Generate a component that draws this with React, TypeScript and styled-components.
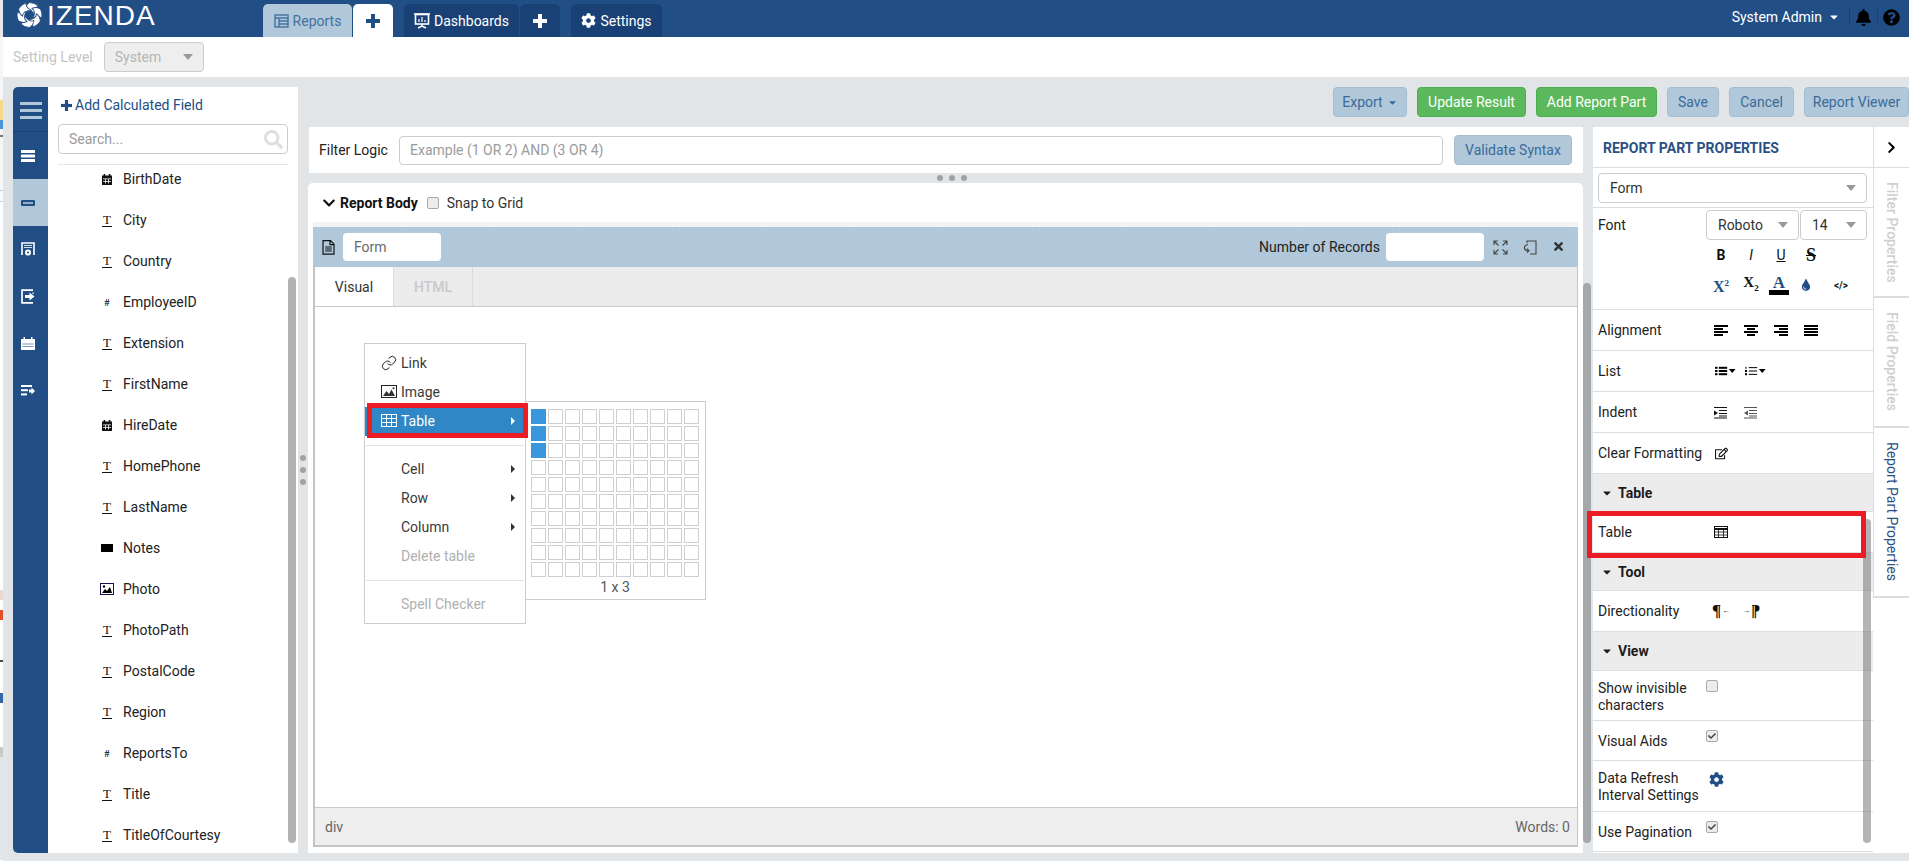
import React from 'react';
import styled, { createGlobalStyle } from 'styled-components';
import {
  FaBell, FaCaretDown, FaCheck, FaChevronDown, FaChevronRight, FaCog, FaQuestionCircle,
  FaRegEdit, FaSearch, FaTimes, FaTint,
} from 'react-icons/fa';
import { Link as LinkIcon } from 'lucide-react';

const BLUE = '#224e86';
const LIGHT = '#b0c8d9';
const PANEL_GRAY = '#e1e5e8';

const GlobalStyle = createGlobalStyle`
  html, body { margin: 0; padding: 0; background: #fff; overflow: hidden; }
  body { font-family: Roboto, "Liberation Sans", sans-serif; font-size: 14px; color: #2b2b2b; }
  * { box-sizing: border-box; }
`;

const Page = styled.div`
  width: 1909px;
  height: 861px;
  display: flex;
  overflow: hidden;
`;

const Sliver = styled.div`
  width: 3px;
  display: flex;
  flex-direction: column;
`;

const SliverBit = styled.div<{ $h: number; $c: string }>`
  height: ${(p) => p.$h}px;
  background: ${(p) => p.$c};
`;

const Shell = styled.div`
  width: 1906px;
  display: flex;
  flex-direction: column;
`;

const TopBar = styled.header`
  height: 37px;
  flex: none;
  display: flex;
  background: ${BLUE};
  color: #fff;
  padding-left: 13px;
`;

const Logo = styled.div`
  width: 247px;
  flex: none;
  display: flex;
  align-items: flex-start;
  gap: 4px;
  & > svg { margin-top: 2px; }
`;

const LogoText = styled.span`
  font-family: "Liberation Sans", sans-serif;
  font-size: 28px;
  line-height: 32px;
  letter-spacing: 1px;
  color: #fff;
`;

const TabGroup = styled.nav`
  display: flex;
  align-self: flex-end;
  height: 33px;
  gap: 1px;
  margin-right: 11px;
`;

const TopTab = styled.div<{ $tone: 'light' | 'white' | 'dark'; $w: number }>`
  width: ${(p) => p.$w}px;
  display: flex;
  align-items: center;
  justify-content: center;
  gap: 4px;
  font-size: 14px;
  border-radius: 5px 5px 0 0;
  background: ${(p) => (p.$tone === 'light' ? LIGHT : p.$tone === 'white' ? '#fff' : '#1a4175')};
  color: ${(p) => (p.$tone === 'dark' ? '#fff' : '#45719f')};
`;

const TopRight = styled.div`
  margin-left: auto;
  display: flex;
  align-items: center;
  height: 34px;
  padding-right: 4px;
`;

const UserName = styled.span`
  margin-right: 6px;
`;

const TopSep = styled.span<{ $ml?: number }>`
  width: 1px;
  height: 18px;
  margin-left: ${(p) => p.$ml ?? 0}px;
  background: #1a3f70;
`;

const TopIcon = styled.span`
  width: 27px;
  display: flex;
  justify-content: center;
  color: #000;
  font-size: 17px;
`;

const SettingRow = styled.div`
  height: 40px;
  flex: none;
  display: flex;
  align-items: center;
  padding-left: 10px;
  gap: 11px;
  color: #c4c4c4;
`;

const DisabledSelect = styled.div`
  width: 100px;
  height: 30px;
  margin-top: -1px;
  display: flex;
  align-items: center;
  justify-content: space-between;
  padding: 0 10px;
  background: #eee;
  border: 1px solid #ccc;
  border-radius: 4px;
  color: #b5b5b5;
`;

const Caret = styled.span<{ $c?: string }>`
  width: 0;
  height: 0;
  border-left: 5px solid transparent;
  border-right: 5px solid transparent;
  border-top: 6px solid ${(p) => p.$c ?? '#999'};
`;

const Workspace = styled.main`
  flex: 1;
  min-height: 0;
  display: flex;
  background: ${PANEL_GRAY};
  padding: 10px 0 8px 10px;
`;

const SideNav = styled.div`
  width: 35px;
  flex: none;
  background: ${BLUE};
  border-radius: 5px 0 0 5px;
  display: flex;
  flex-direction: column;
`;

const NavBurger = styled.div`
  height: 45px;
  padding-top: 3px;
  border-bottom: 1px solid #1a4175;
  display: flex;
  flex-direction: column;
  justify-content: center;
  align-items: center;
  gap: 4px;
`;

const BurgerBar = styled.span`
  width: 22px;
  height: 3px;
  background: ${LIGHT};
`;

const NavItem = styled.div<{ $active?: boolean }>`
  height: 47px;
  display: flex;
  align-items: center;
  justify-content: center;
  padding-right: 5px;
  background: ${(p) => (p.$active ? LIGHT : 'transparent')};
`;

const FieldPanel = styled.aside`
  position: relative;
  width: 250px;
  flex: none;
  background: #fff;
  padding: 0 10px;
  display: flex;
  flex-direction: column;
`;

const AddField = styled.div`
  height: 36px;
  margin-bottom: 1px;
  display: flex;
  align-items: center;
  gap: 3px;
  padding-left: 3px;
  color: ${BLUE};
  font-size: 14px;
`;

const SearchBox = styled.div`
  height: 30px;
  display: flex;
  align-items: center;
  justify-content: space-between;
  padding: 0 4px 0 10px;
  border: 1px solid #ccc;
  border-radius: 4px;
  color: #dedede;
  font-size: 19px;
`;

const PlainInput = styled.input`
  flex: 1;
  min-width: 0;
  border: 0;
  outline: 0;
  padding: 0;
  background: transparent;
  font: 14px Roboto, sans-serif;
  color: #555;
  &::placeholder { color: #9b9b9b; opacity: 1; }
`;

const Divider = styled.div`
  height: 1px;
  background: #e4e4e4;
  margin-top: 10px;
  flex: none;
`;

const FieldList = styled.div`
  display: flex;
  flex-direction: column;
  gap: 11px;
`;

const FieldRow = styled.div`
  height: 30px;
  display: flex;
  align-items: center;
  padding: 0 0 2px 40px;
  gap: 7px;
  color: #222;
`;

const FieldGlyph = styled.span`
  width: 18px;
  display: flex;
  justify-content: center;
  color: #111;
`;

const TextGlyph = styled.span`
  font-family: "Liberation Serif", serif;
  font-size: 13px;
  line-height: 12px;
  border-bottom: 1px solid #111;
  padding: 0 1px;
`;

const NumGlyph = styled.span`
  font-family: "Liberation Serif", serif;
  font-size: 10px;
  font-weight: 700;
`;

const NotesGlyph = styled.span`
  width: 12px;
  height: 8px;
  background: #000;
`;

const ListThumb = styled.div`
  position: absolute;
  right: 2px;
  top: 190px;
  bottom: 10px;
  width: 8px;
  border-radius: 4px;
  background: #b3b3b3;
`;

const Splitter = styled.div`
  width: 10px;
  flex: none;
  display: flex;
  flex-direction: column;
  justify-content: center;
  align-items: center;
  gap: 6px;
  padding-bottom: 1px;
`;

const Dot = styled.span`
  width: 6px;
  height: 6px;
  border-radius: 50%;
  background: #a2a2a2;
`;

const RightColumn = styled.div`
  flex: 1;
  min-width: 0;
  display: flex;
  flex-direction: column;
`;

const Toolbar = styled.div`
  height: 30px;
  flex: none;
  margin-bottom: 10px;
  display: flex;
  justify-content: flex-end;
  gap: 10px;
`;

const Btn = styled.div<{ $green?: boolean; $w: number; $ml?: number }>`
  width: ${(p) => p.$w}px;
  height: 30px;
  margin-left: ${(p) => p.$ml ?? 0}px;
  display: flex;
  align-items: center;
  justify-content: center;
  gap: 4px;
  border-radius: 4px;
  border: 1px solid ${(p) => (p.$green ? '#4cae4c' : '#a3bed1')};
  background: ${(p) => (p.$green ? '#5cb85c' : LIGHT)};
  color: ${(p) => (p.$green ? '#fff' : '#3c6a98')};
  white-space: nowrap;
`;

const BodyRow = styled.div`
  flex: 1;
  min-height: 0;
  display: flex;
`;

const CenterColumn = styled.div`
  width: 1275px;
  flex: none;
  display: flex;
  flex-direction: column;
`;

const FilterPanel = styled.div`
  height: 46px;
  flex: none;
  margin-left: 1px;
  background: #fff;
  display: flex;
  align-items: center;
  padding: 0 11px 0 10px;
`;

const FilterLabel = styled.span`
  width: 80px;
  flex: none;
  color: #222;
`;

const TextBox = styled.div`
  flex: 1;
  height: 29px;
  display: flex;
  align-items: center;
  padding: 0 10px;
  border: 1px solid #ccc;
  border-radius: 4px;
  background: #fff;
`;

const SplitHandle = styled.div`
  height: 10px;
  flex: none;
  display: flex;
  justify-content: center;
  align-items: center;
  gap: 6px;
  padding-left: 12px;
`;

const ReportBody = styled.section`
  flex: 1;
  min-height: 0;
  background: #fff;
  border-radius: 5px 5px 0 0;
  padding: 0 5px 6px;
  display: flex;
  flex-direction: column;
`;

const ReportHead = styled.div`
  height: 39px;
  flex: none;
  display: flex;
  align-items: center;
  padding-left: 9px;
  gap: 4px;
`;

const HeadTitle = styled.span`
  font-weight: 700;
  color: #111;
  margin-right: 5px;
`;

const SnapLabel = styled.span`
  margin-left: 4px;
  color: #333;
`;

const Ruler = styled.div`
  height: 5px;
  flex: none;
  background: repeating-linear-gradient(90deg, #f3f3f3 0 89px, #fbfbfb 89px 90px);
`;

const FormBlock = styled.div`
  flex: 1;
  min-height: 0;
  display: flex;
  flex-direction: column;
  border: solid #c4c4c4;
  border-width: 0 1px 2px 2px;
`;

const FormHeader = styled.div`
  height: 40px;
  flex: none;
  margin-left: -2px;
  margin-right: -1px;
  background: ${LIGHT};
  display: flex;
  align-items: center;
  padding-left: 9px;
`;

const DocIcon = styled.span`
  width: 21px;
  display: flex;
`;

const HeaderInput = styled.div<{ $w: number }>`
  width: ${(p) => p.$w}px;
  height: 28px;
  border-radius: 4px;
  background: #fff;
  display: flex;
  align-items: center;
  padding-left: 11px;
  color: #6a6a6a;
`;

const RecordsLabel = styled.span`
  margin-left: auto;
  margin-right: 6px;
  color: #222;
`;

const HeaderIcon = styled.span`
  width: 29px;
  display: flex;
  justify-content: center;
  color: #333;
`;

const HeaderIcons = styled.div`
  display: flex;
  margin-left: 2px;
  margin-right: 5px;
`;

const EditorTabs = styled.div`
  height: 40px;
  flex: none;
  display: flex;
  background: #ececec;
  border-bottom: 1px solid #c9c9c9;
`;

const EditorTab = styled.div<{ $active?: boolean }>`
  width: 79px;
  display: flex;
  align-items: center;
  justify-content: center;
  background: ${(p) => (p.$active ? '#fff' : '#ececec')};
  color: ${(p) => (p.$active ? '#333' : '#c9c9c9')};
  border-right: 1px solid #dcdcdc;
  font-weight: ${(p) => (p.$active ? 400 : 500)};
`;

const Editor = styled.div`
  position: relative;
  flex: 1;
  background: #fff;
`;

const Menu = styled.div`
  position: absolute;
  left: 49px;
  top: 36px;
  width: 162px;
  padding: 5px 0 4px;
  background: #fff;
  border: 1px solid #ccc;
  z-index: 2;
`;

const MenuItem = styled.div<{ $active?: boolean; $off?: boolean }>`
  position: relative;
  height: 29px;
  display: flex;
  align-items: center;
  padding: 0 0 2px 16px;
  gap: 3px;
  background: ${(p) => (p.$active ? '#2f87c5' : 'transparent')};
  color: ${(p) => (p.$active ? '#fff' : p.$off ? '#b0b0b0' : '#3a3a3a')};
`;

const MenuGlyph = styled.span`
  width: 17px;
  height: 16px;
  display: flex;
  align-items: center;
  flex: none;
`;

const MenuArrow = styled.span<{ $c: string }>`
  position: absolute;
  right: 10px;
  top: 10px;
  width: 0;
  height: 0;
  border-top: 4px solid transparent;
  border-bottom: 4px solid transparent;
  border-left: 4px solid ${(p) => p.$c};
`;

const MenuSep = styled.div`
  height: 1px;
  margin: 9px 1px;
  background: #e3e3e3;
`;

const RedFrame = styled.div`
  position: absolute;
  border: 5px solid #ed1c24;
  z-index: 3;
  pointer-events: none;
`;

const TableFrame = styled(RedFrame)`
  left: 2px;
  top: -4px;
  width: 161px;
  height: 35px;
`;

const GridPopup = styled.div`
  position: absolute;
  left: 209px;
  top: 94px;
  width: 182px;
  height: 199px;
  background: #fff;
  border: 1px solid #ccc;
  padding: 7px 6px 0;
  z-index: 1;
`;

const CellGrid = styled.div`
  display: grid;
  grid-template-columns: repeat(10, 15px);
  grid-auto-rows: 15px;
  gap: 2px;
`;

const Cell = styled.span<{ $on: boolean }>`
  border: 1px solid ${(p) => (p.$on ? '#3a96dd' : '#cfcfcf')};
  background: ${(p) => (p.$on ? '#3a96dd' : '#fff')};
`;

const GridLabel = styled.div`
  margin-top: 2px;
  text-align: center;
  color: #555;
`;

const StatusBar = styled.div`
  height: 38px;
  flex: none;
  display: flex;
  align-items: center;
  justify-content: space-between;
  padding: 0 7px 0 10px;
  background: #eee;
  border-top: 1px solid #c9c9c9;
  color: #666;
`;

const Gutter = styled.div`
  width: 10px;
  flex: none;
  padding: 156px 2px 10px 0;
  display: flex;
`;

const GutterThumb = styled.div`
  flex: 1;
  border-radius: 4px;
  background: #a5a8aa;
`;

const PropsPanel = styled.div`
  position: relative;
  width: 280px;
  flex: none;
  background: #fff;
  display: flex;
  flex-direction: column;
`;

const PropsTitle = styled.div`
  height: 41px;
  flex: none;
  display: flex;
  align-items: center;
  padding: 2px 0 0 10px;
  border-bottom: 1px solid #ddd;
  font-size: 14px;
  font-weight: 700;
  color: #2b5184;
`;

const PropRow = styled.div<{ $h: number }>`
  height: ${(p) => p.$h}px;
  flex: none;
  display: flex;
  align-items: center;
  padding-left: 5px;
  border-bottom: 1px solid #ddd;
  color: #222;
`;

const TopAlignedRow = styled(PropRow)`
  align-items: flex-start;
  padding-top: 9px;
  line-height: 17px;
`;

const SectionHead = styled(PropRow)`
  background: #ececec;
  gap: 5px;
  padding-left: 8px;
  font-weight: 700;
  color: #1c1c1c;
`;

const PropLabel = styled.span`
  width: 108px;
  flex: none;
`;

const PropSelect = styled.div<{ $w?: number }>`
  ${(p) => (p.$w ? `width: ${p.$w}px; flex: none;` : 'flex: 1;')}
  height: 30px;
  display: flex;
  align-items: center;
  justify-content: space-between;
  padding: 0 10px 0 11px;
  border: 1px solid #ccc;
  border-radius: 4px;
  color: #333;
`;

const FontControls = styled.div`
  display: flex;
  flex-direction: column;
`;

const FontSelects = styled.div`
  display: flex;
  gap: 1px;
  margin-top: -7px;
`;

const IconRow = styled.div`
  display: flex;
  align-items: center;
  height: 30px;
`;

const IconCell = styled.span<{ $w?: number }>`
  width: ${(p) => p.$w ?? 30}px;
  flex: none;
  display: flex;
  align-items: center;
  justify-content: center;
  color: #111;
`;

const StartCell = styled(IconCell)`
  justify-content: flex-start;
  padding-left: 9px;
`;

const FmtLetter = styled.span<{ $serif?: boolean; $bold?: boolean; $italic?: boolean; $under?: boolean; $strike?: boolean; $blue?: boolean; $size?: number }>`
  font-family: ${(p) => (p.$serif ? '"Liberation Serif", serif' : 'Roboto, sans-serif')};
  font-weight: ${(p) => (p.$bold ? 700 : 400)};
  font-style: ${(p) => (p.$italic ? 'italic' : 'normal')};
  text-decoration: ${(p) => (p.$under ? 'underline' : p.$strike ? 'line-through' : 'none')};
  color: ${(p) => (p.$blue ? BLUE : '#111')};
  font-size: ${(p) => p.$size ?? 14}px;
  line-height: 16px;
`;

const TinySup = styled.sup`
  font-size: 9px;
`;

const TinySub = styled.sub`
  font-size: 9px;
`;

const ColorLetter = styled.span`
  display: flex;
  flex-direction: column;
  align-items: center;
  font-family: "Liberation Serif", serif;
  font-weight: 700;
  font-size: 17px;
  line-height: 15px;
  color: ${BLUE};
  &::after {
    content: '';
    width: 20px;
    height: 5px;
    background: #000;
  }
`;

const CodeGlyph = styled.span`
  font-size: 10px;
  font-weight: 700;
  color: #111;
`;

const DirGlyph = styled.span`
  display: flex;
  align-items: center;
  gap: 1px;
  font-family: "Liberation Serif", serif;
  font-size: 17px;
  line-height: 16px;
  font-weight: 700;
  color: #111;
`;

const DirArrow = styled.span`
  font-family: Roboto, sans-serif;
  font-size: 8px;
  line-height: 8px;
`;

const Mirrored = styled.span`
  display: inline-block;
  transform: scaleX(-1);
`;

const Check = styled.span<{ $lift?: number }>`
  width: 12px;
  height: 12px;
  flex: none;
  display: flex;
  align-items: center;
  justify-content: center;
  margin-bottom: ${(p) => p.$lift ?? 0}px;
  background: #ececec;
  border: 1px solid #a9a9a9;
  border-radius: 2px;
  color: #444;
  font-size: 8px;
`;

const CogSlot = styled.span`
  margin: 2px 0 0 3px;
  display: flex;
  color: ${BLUE};
  font-size: 15px;
`;

const PropsThumb = styled.div`
  position: absolute;
  left: 270px;
  top: 392px;
  bottom: 10px;
  width: 8px;
  border-radius: 4px;
  background: rgba(130, 130, 130, 0.6);
`;

const PropsFrame = styled(RedFrame)`
  left: -6px;
  top: 384px;
  width: 279px;
  height: 47px;
`;

const SideTabs = styled.div`
  width: 36px;
  flex: none;
  background: #fff;
  display: flex;
  flex-direction: column;
`;

const CollapseCell = styled.div`
  height: 41px;
  flex: none;
  display: flex;
  align-items: center;
  justify-content: center;
  border-left: 1px solid #ddd;
  border-bottom: 1px solid #ddd;
  color: #000;
  font-size: 13px;
`;

const SideTab = styled.div<{ $active?: boolean; $h: number }>`
  height: ${(p) => p.$h}px;
  flex: none;
  padding: 14px 9px 0 0;
  border-left: 1px solid #ddd;
  border-bottom: 2px solid #ddd;
  writing-mode: vertical-rl;
  white-space: nowrap;
  font-weight: ${(p) => (p.$active ? 400 : 500)};
  color: ${(p) => (p.$active ? '#2b5184' : '#cfcfcf')};
`;

const Swirl = () => (
  <svg width="27" height="26" viewBox="0 0 26 26" fill="#fff" stroke={BLUE} strokeWidth="0.9">
    {[0, 60, 120, 180, 240, 300].map((a) => (
      <path key={a} transform={`rotate(${a} 13 13)`} d="M13 .5 A12.5 12.5 0 0 1 21.8 4.2 C19 5 17.5 8 18 12.5 C15.5 8 12 6 8.5 7.5 C8.8 5 10.5 2 13 .5Z" />
    ))}
  </svg>
);

const PlusGlyph = ({ c, s = 14 }: { c: string; s?: number }) => (
  <svg width={s} height={s} viewBox="0 0 14 14" fill={c}>
    <rect x="5" width="4" height="14" />
    <rect y="5" width="14" height="4" />
  </svg>
);

const ReportGlyph = () => (
  <svg width="15" height="14" viewBox="0 0 15 14" fill="none" stroke="#45719f" strokeWidth="1.4">
    <rect x="1" y="1" width="13" height="12" />
    <path d="M1 4h13M5 4v9M5 7h9M5 10h9" />
  </svg>
);

const DashGlyph = () => (
  <svg width="16" height="16" viewBox="0 0 16 16" fill="none" stroke="#fff">
    <rect x="1.5" y="1.5" width="13" height="9.5" strokeWidth="1.6" />
    <path d="M0 1h16M8 11v2M4 15l4-2 4 2" strokeWidth="1.4" />
    <path d="M5 9V6M8 9V4M11 9V7" strokeWidth="1.2" />
  </svg>
);

const StackGlyph = () => (
  <svg width="14" height="12" viewBox="0 0 14 12" fill="#fff">
    <rect y="0" width="14" height="3" rx="0.6" />
    <rect y="4.5" width="14" height="3" rx="0.6" />
    <rect y="9" width="14" height="3" rx="0.6" />
  </svg>
);

const FieldsGlyph = () => (
  <svg width="14" height="6" viewBox="0 0 14 6">
    <rect width="14" height="6" rx="1" fill={BLUE} />
    <rect x="2" y="2.2" width="10" height="1.6" fill={LIGHT} />
  </svg>
);

const ReportGearGlyph = () => (
  <svg width="14" height="15" viewBox="0 0 14 15" fill="none">
    <path d="M1 13V1h12v12" stroke="#fff" strokeWidth="1.6" />
    <path d="M3 3.5h8M3 5.5h8" stroke="#cfdbe8" strokeWidth="1" />
    <circle cx="7" cy="10.5" r="3" fill="#fff" />
    <circle cx="7" cy="10.5" r="1.1" fill={BLUE} />
  </svg>
);

const ExportGlyph = () => (
  <svg width="14" height="15" viewBox="0 0 14 15" fill="none">
    <path d="M12 1.2H1v12.6h11" stroke="#fff" strokeWidth="1.7" />
    <path d="M12 3.5v1.5" stroke="#fff" strokeWidth="1.2" />
    <path d="M4 6h4.5V3.6L13.5 7.5l-5 3.9V9H4z" fill="#fff" />
  </svg>
);

const CalendarGlyph = () => (
  <svg width="14" height="13" viewBox="0 0 14 13" fill="#fff">
    <rect y="2" width="14" height="11" rx="0.6" />
    <rect x="2.5" y="0" width="1.5" height="3" />
    <rect x="10" y="0" width="1.5" height="3" />
    <path d="M1.5 6.5h11v1h-11zM1.5 9h11v1h-11z" fill="#7d93b6" />
  </svg>
);

const ListArrowGlyph = () => (
  <svg width="14" height="11" viewBox="0 0 14 11" fill="#fff">
    <rect width="11" height="2" />
    <rect y="4.2" width="7" height="2" />
    <rect y="8.4" width="6" height="2" />
    <path d="M8 4.4h2.5V2.6L14 6l-3.5 3.4V7.6H8z" />
  </svg>
);

const CalField = () => (
  <svg width="10" height="11" viewBox="0 0 10 11" fill="#111">
    <rect y="1.5" width="10" height="9.5" />
    <rect x="1.6" width="1.6" height="2.5" />
    <rect x="6.8" width="1.6" height="2.5" />
    <path d="M1 4.5h8v.8H1zM1 7h8v.8H1zM3.2 4.5h.8v5h-.8zM6 4.5h.8v5H6z" fill="#fff" />
  </svg>
);

const PhotoField = () => (
  <svg width="14" height="12" viewBox="0 0 14 12">
    <rect x="0.5" y="0.5" width="13" height="11" fill="#fff" stroke="#1a0f4a" />
    <path d="M2 10l3-4 2 2 3-4 2 6z" fill="#000" />
    <circle cx="4" cy="3.5" r="1.2" fill="#000" />
  </svg>
);

const MenuImage = () => (
  <svg width="16" height="13" viewBox="0 0 16 13">
    <rect x="0.5" y="0.5" width="15" height="12" fill="#fff" stroke="#222" />
    <path d="M2 11l3.5-5 2.5 3 2.5-4.5L14 11z" fill="#333" />
    <circle cx="12.5" cy="3.2" r="1" fill="#333" />
  </svg>
);

const TableGlyph = ({ c }: { c: string }) => (
  <svg width="16" height="13" viewBox="0 0 16 13" fill="none" stroke={c}>
    <rect x="0.5" y="0.5" width="15" height="12" />
    <path d="M0 4.5h16M0 8.5h16M5.5 0v13M10.5 0v13" />
  </svg>
);

const PropTableGlyph = () => (
  <svg width="14" height="12" viewBox="0 0 14 12" fill="none" stroke="#111">
    <rect x="0.5" y="0.5" width="13" height="11" />
    <path d="M0 3h14" strokeWidth="2" />
    <path d="M0 6h14M0 9h14M4.5 3v9M9.5 3v9" strokeWidth="0.8" />
  </svg>
);

const AlignGlyph = ({ lines }: { lines: [number, number][] }) => (
  <svg width="14" height="11" viewBox="0 0 14 11" fill="#000">
    {lines.map(([x, w], i) => (
      <rect key={i} x={x} y={i * 3} width={w} height="2" />
    ))}
  </svg>
);

const BulletList = () => (
  <svg width="25" height="10" viewBox="0 0 25 10" fill="#000">
    <rect width="3" height="2.4" />
    <rect y="3.8" width="3" height="2.4" />
    <rect y="7.6" width="3" height="2.4" />
    <rect x="4.5" y="0" width="10" height="2.4" />
    <rect x="4.5" y="3.8" width="10" height="2.4" />
    <rect x="4.5" y="7.6" width="10" height="2.4" />
    <path d="M16.5 2.5h8l-4 5z" />
  </svg>
);

const NumberList = () => (
  <svg width="25" height="10" viewBox="0 0 25 10" fill="#000">
    <rect x="0.5" width="1.2" height="2.4" />
    <rect y="3.8" width="2.4" height="2.4" />
    <rect y="7.6" width="2.4" height="2.4" />
    <rect x="4.5" y="0.4" width="10" height="1.2" />
    <rect x="4.5" y="4.4" width="10" height="1.2" />
    <rect x="4.5" y="8.4" width="10" height="1.2" />
    <path d="M16.5 2.5h8l-4 5z" />
  </svg>
);

const IndentGlyph = ({ out }: { out?: boolean }) => (
  <svg width="14" height="13" viewBox="0 0 14 13" fill={out ? '#555' : '#111'}>
    <rect x="0" y="1" width="13" height="1" />
    <rect x="5" y="4" width="8" height="1" />
    <rect x="5" y="7" width="8" height="1" />
    <rect x="5" y="9.5" width="8" height="1" />
    <rect x="0" y="11.5" width="13" height="1" />
    <path d={out ? 'M4 4.5v5L0 7z' : 'M0 4.5v5L4 7z'} />
  </svg>
);

const DocGlyph = () => (
  <svg width="13" height="15" viewBox="0 0 13 15" fill="none" stroke="#111" strokeWidth="1.2">
    <path d="M1 .7h7.5L12 4.2v10H1zM8 .7v4h4M3.2 7h6.6M3.2 9h6.6M3.2 11h6.6" />
  </svg>
);

const ExpandGlyph = () => (
  <svg width="15" height="15" viewBox="0 0 15 15" fill="none" stroke="#444" strokeWidth="1.1">
    <path d="M1 5V1h4M1 1l4.5 4.5M10 1h4v4M14 1L9.5 5.5M1 10v4h4M1 14l4.5-4.5M10 14h4v-4M14 14L9.5 9.5" />
  </svg>
);

const PopGlyph = () => (
  <svg width="14" height="15" viewBox="0 0 14 15" fill="none" stroke="#444" strokeWidth="1.1">
    <path d="M4 3V1h9v13H7M5 4.5C2.5 5 1 6.5 1.5 8.5c.4 1.6 2 2.4 4.5 2.2M4 8.5l2 2.2-2.2 1.8" />
  </svg>
);

const fields: { name: string; kind: 'date' | 'text' | 'num' | 'notes' | 'photo' }[] = [
  { name: 'BirthDate', kind: 'date' },
  { name: 'City', kind: 'text' },
  { name: 'Country', kind: 'text' },
  { name: 'EmployeeID', kind: 'num' },
  { name: 'Extension', kind: 'text' },
  { name: 'FirstName', kind: 'text' },
  { name: 'HireDate', kind: 'date' },
  { name: 'HomePhone', kind: 'text' },
  { name: 'LastName', kind: 'text' },
  { name: 'Notes', kind: 'notes' },
  { name: 'Photo', kind: 'photo' },
  { name: 'PhotoPath', kind: 'text' },
  { name: 'PostalCode', kind: 'text' },
  { name: 'Region', kind: 'text' },
  { name: 'ReportsTo', kind: 'num' },
  { name: 'Title', kind: 'text' },
  { name: 'TitleOfCourtesy', kind: 'text' },
];

const FieldIcon = ({ kind }: { kind: string }) => {
  if (kind === 'date') return <CalField />;
  if (kind === 'text') return <TextGlyph>T</TextGlyph>;
  if (kind === 'num') return <NumGlyph>#</NumGlyph>;
  if (kind === 'notes') return <NotesGlyph />;
  return <PhotoField />;
};

const sliverBits: [number, string][] = [
  [37, '#e8e8e8'], [63, '#f6f6f6'], [20, '#f6d98c'], [9, '#4a93d8'], [6, '#f4f4f4'], [2, '#777'],
  [53, '#f6f6f6'], [1, '#cfcfcf'], [10, '#fafafa'], [1, '#cfcfcf'], [388, '#fff'], [10, '#ead9cc'],
  [10, '#fff'], [10, '#e2512c'], [40, '#fff'], [2, '#444'], [31, '#fff'], [10, '#3567a8'],
  [44, '#fff'], [10, '#c9c9c9'], [103, PANEL_GRAY],
];

export default function App() {
  return (
    <Page>
      <GlobalStyle />
      <Sliver>
        {sliverBits.map(([h, c], i) => (
          <SliverBit key={i} $h={h} $c={c} />
        ))}
      </Sliver>
      <Shell>
        <TopBar>
          <Logo>
            <Swirl />
            <LogoText>IZENDA</LogoText>
          </Logo>
          <TabGroup>
            <TopTab $tone="light" $w={89}><ReportGlyph />Reports</TopTab>
            <TopTab $tone="white" $w={40}><PlusGlyph c={BLUE} /></TopTab>
          </TabGroup>
          <TabGroup>
            <TopTab $tone="dark" $w={115}><DashGlyph />Dashboards</TopTab>
            <TopTab $tone="dark" $w={40}><PlusGlyph c="#fff" /></TopTab>
          </TabGroup>
          <TabGroup>
            <TopTab $tone="dark" $w={91}><FaCog size={15} color="#fff" />Settings</TopTab>
          </TabGroup>
          <TopRight>
            <UserName>System Admin</UserName>
            <FaCaretDown size={12} color="#fff" />
            <TopSep $ml={9} />
            <TopIcon><FaBell /></TopIcon>
            <TopSep />
            <TopIcon><FaQuestionCircle /></TopIcon>
          </TopRight>
        </TopBar>
        <SettingRow>
          Setting Level
          <DisabledSelect>System<Caret /></DisabledSelect>
        </SettingRow>
        <Workspace>
          <SideNav>
            <NavBurger>
              <BurgerBar />
              <BurgerBar />
              <BurgerBar />
            </NavBurger>
            <NavItem><StackGlyph /></NavItem>
            <NavItem $active><FieldsGlyph /></NavItem>
            <NavItem><ReportGearGlyph /></NavItem>
            <NavItem><ExportGlyph /></NavItem>
            <NavItem><CalendarGlyph /></NavItem>
            <NavItem><ListArrowGlyph /></NavItem>
          </SideNav>
          <FieldPanel>
            <AddField><PlusGlyph c={BLUE} s={11} />Add Calculated Field</AddField>
            <SearchBox>
              <PlainInput placeholder="Search..." readOnly />
              <FaSearch />
            </SearchBox>
            <Divider />
            <FieldList>
              {fields.map((f) => (
                <FieldRow key={f.name}>
                  <FieldGlyph><FieldIcon kind={f.kind} /></FieldGlyph>
                  {f.name}
                </FieldRow>
              ))}
            </FieldList>
            <ListThumb />
          </FieldPanel>
          <Splitter>
            <Dot />
            <Dot />
            <Dot />
          </Splitter>
          <RightColumn>
            <Toolbar>
              <Btn $w={74}>Export<FaCaretDown size={11} /></Btn>
              <Btn $green $w={109}>Update Result</Btn>
              <Btn $green $w={121}>Add Report Part</Btn>
              <Btn $w={52}>Save</Btn>
              <Btn $w={65}>Cancel</Btn>
              <Btn $w={105}>Report Viewer</Btn>
            </Toolbar>
            <BodyRow>
              <CenterColumn>
                <FilterPanel>
                  <FilterLabel>Filter Logic</FilterLabel>
                  <TextBox>
                    <PlainInput placeholder="Example (1 OR 2) AND (3 OR 4)" readOnly />
                  </TextBox>
                  <Btn $w={118} $ml={11}>Validate Syntax</Btn>
                </FilterPanel>
                <SplitHandle>
                  <Dot />
                  <Dot />
                  <Dot />
                </SplitHandle>
                <ReportBody>
                  <ReportHead>
                    <FaChevronDown size={14} color="#111" />
                    <HeadTitle>Report Body</HeadTitle>
                    <Check />
                    <SnapLabel>Snap to Grid</SnapLabel>
                  </ReportHead>
                  <Ruler />
                  <FormBlock>
                    <FormHeader>
                      <DocIcon><DocGlyph /></DocIcon>
                      <HeaderInput $w={98}>Form</HeaderInput>
                      <RecordsLabel>Number of Records</RecordsLabel>
                      <HeaderInput $w={98} />
                      <HeaderIcons>
                        <HeaderIcon><ExpandGlyph /></HeaderIcon>
                        <HeaderIcon><PopGlyph /></HeaderIcon>
                        <HeaderIcon><FaTimes size={13} /></HeaderIcon>
                      </HeaderIcons>
                    </FormHeader>
                    <EditorTabs>
                      <EditorTab $active>Visual</EditorTab>
                      <EditorTab>HTML</EditorTab>
                    </EditorTabs>
                    <Editor>
                      <Menu>
                        <MenuItem><MenuGlyph><LinkIcon size={16} color="#222" strokeWidth={1.5} /></MenuGlyph>Link</MenuItem>
                        <MenuItem><MenuGlyph><MenuImage /></MenuGlyph>Image</MenuItem>
                        <MenuItem $active>
                          <MenuGlyph><TableGlyph c="#fff" /></MenuGlyph>Table
                          <MenuArrow $c="#fff" />
                          <TableFrame />
                        </MenuItem>
                        <MenuSep />
                        <MenuItem><MenuGlyph />Cell<MenuArrow $c="#333" /></MenuItem>
                        <MenuItem><MenuGlyph />Row<MenuArrow $c="#333" /></MenuItem>
                        <MenuItem><MenuGlyph />Column<MenuArrow $c="#333" /></MenuItem>
                        <MenuItem $off><MenuGlyph />Delete table</MenuItem>
                        <MenuSep />
                        <MenuItem $off><MenuGlyph />Spell Checker</MenuItem>
                      </Menu>
                      <GridPopup>
                        <CellGrid>
                          {Array.from({ length: 100 }, (_, i) => (
                            <Cell key={i} $on={i % 10 === 0 && i < 30} />
                          ))}
                        </CellGrid>
                        <GridLabel>1 x 3</GridLabel>
                      </GridPopup>
                    </Editor>
                    <StatusBar>
                      <span>div</span>
                      <span>Words: 0</span>
                    </StatusBar>
                  </FormBlock>
                </ReportBody>
              </CenterColumn>
              <Gutter>
                <GutterThumb />
              </Gutter>
              <PropsPanel>
                <PropsTitle>REPORT PART PROPERTIES</PropsTitle>
                <PropRow $h={40}>
                  <PropSelect>Form<Caret /></PropSelect>
                  <IconCell $w={6} />
                </PropRow>
                <TopAlignedRow $h={102}>
                  <PropLabel>Font</PropLabel>
                  <FontControls>
                    <FontSelects>
                      <PropSelect $w={93}>Roboto<Caret /></PropSelect>
                      <PropSelect $w={67}>14<Caret /></PropSelect>
                    </FontSelects>
                    <IconRow>
                      <IconCell><FmtLetter $bold>B</FmtLetter></IconCell>
                      <IconCell><FmtLetter $italic>I</FmtLetter></IconCell>
                      <IconCell><FmtLetter $under>U</FmtLetter></IconCell>
                      <IconCell><FmtLetter $serif $bold $strike $size={18}>S</FmtLetter></IconCell>
                    </IconRow>
                    <IconRow>
                      <IconCell><FmtLetter $serif $bold $blue $size={16}>X<TinySup>2</TinySup></FmtLetter></IconCell>
                      <IconCell><FmtLetter $serif $bold $size={15}>X<TinySub>2</TinySub></FmtLetter></IconCell>
                      <IconCell $w={26}><ColorLetter>A</ColorLetter></IconCell>
                      <IconCell $w={28}><FaTint size={12} color={BLUE} /></IconCell>
                      <IconCell $w={42}><CodeGlyph>&lt;/&gt;</CodeGlyph></IconCell>
                    </IconRow>
                  </FontControls>
                </TopAlignedRow>
                <PropRow $h={41}>
                  <PropLabel>Alignment</PropLabel>
                  <IconCell><AlignGlyph lines={[[0, 14], [0, 9], [0, 14], [0, 9]]} /></IconCell>
                  <IconCell><AlignGlyph lines={[[0, 14], [3, 8], [0, 14], [3, 8]]} /></IconCell>
                  <IconCell><AlignGlyph lines={[[0, 14], [5, 9], [0, 14], [5, 9]]} /></IconCell>
                  <IconCell><AlignGlyph lines={[[0, 14], [0, 14], [0, 14], [0, 14]]} /></IconCell>
                </PropRow>
                <PropRow $h={41}>
                  <PropLabel>List</PropLabel>
                  <StartCell><BulletList /></StartCell>
                  <StartCell><NumberList /></StartCell>
                </PropRow>
                <PropRow $h={41}>
                  <PropLabel>Indent</PropLabel>
                  <IconCell><IndentGlyph /></IconCell>
                  <IconCell><IndentGlyph out /></IconCell>
                </PropRow>
                <PropRow $h={41}>
                  <PropLabel>Clear Formatting</PropLabel>
                  <IconCell><FaRegEdit size={13} /></IconCell>
                </PropRow>
                <SectionHead $h={38}><FaCaretDown size={12} />Table</SectionHead>
                <PropRow $h={41}>
                  <PropLabel>Table</PropLabel>
                  <IconCell><PropTableGlyph /></IconCell>
                </PropRow>
                <SectionHead $h={38}><FaCaretDown size={12} />Tool</SectionHead>
                <PropRow $h={41}>
                  <PropLabel>Directionality</PropLabel>
                  <IconCell><DirGlyph>¶<DirArrow>←</DirArrow></DirGlyph></IconCell>
                  <IconCell><DirGlyph><DirArrow>→</DirArrow><Mirrored>¶</Mirrored></DirGlyph></IconCell>
                </PropRow>
                <SectionHead $h={39}><FaCaretDown size={12} />View</SectionHead>
                <TopAlignedRow $h={50}>
                  <PropLabel>Show invisible characters</PropLabel>
                  <Check />
                </TopAlignedRow>
                <PropRow $h={40}>
                  <PropLabel>Visual Aids</PropLabel>
                  <Check $lift={10}><FaCheck /></Check>
                </PropRow>
                <TopAlignedRow $h={51}>
                  <PropLabel>Data Refresh Interval Settings</PropLabel>
                  <CogSlot><FaCog /></CogSlot>
                </TopAlignedRow>
                <PropRow $h={40}>
                  <PropLabel>Use Pagination</PropLabel>
                  <Check $lift={10}><FaCheck /></Check>
                </PropRow>
                <PropsThumb />
                <PropsFrame />
              </PropsPanel>
              <SideTabs>
                <CollapseCell><FaChevronRight /></CollapseCell>
                <SideTab $h={130}>Filter Properties</SideTab>
                <SideTab $h={130}>Field Properties</SideTab>
                <SideTab $active $h={170}>Report Part Properties</SideTab>
              </SideTabs>
            </BodyRow>
          </RightColumn>
        </Workspace>
      </Shell>
    </Page>
  );
}
